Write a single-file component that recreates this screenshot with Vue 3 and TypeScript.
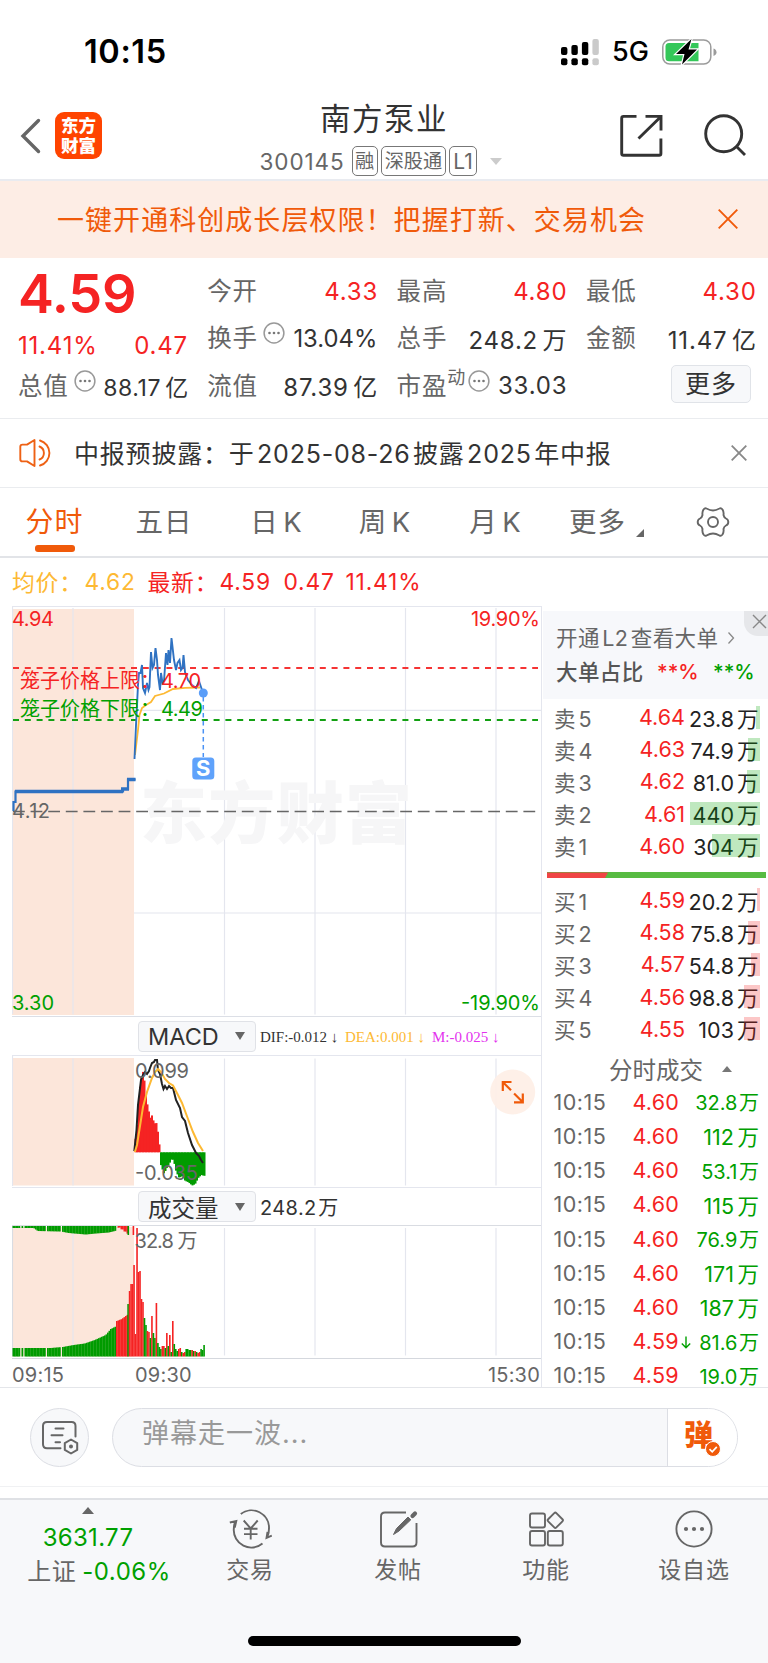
<script setup lang="ts">
interface Quote { label: string; value: string; up?: boolean; dots?: boolean; sup?: string }
interface Order { side: string; price: string; vol: string; bar: number }
interface Trade { price: string; vol: string; down?: boolean }
interface Bar { x: number; y: number; h: number; w: number; c: string }
type Pt = [number, number]

const RED = '#f52323'
const GREEN = '#009b00'

const quoteCols: Quote[][] = [
  [
    { label: '今开', value: '4.33', up: true },
    { label: '换手', value: '13.04%', dots: true },
    { label: '流值', value: '87.39 亿' },
  ],
  [
    { label: '最高', value: '4.80', up: true },
    { label: '总手', value: '248.2 万' },
    { label: '市盈', value: '33.03', dots: true, sup: '动' },
  ],
  [
    { label: '最低', value: '4.30', up: true },
    { label: '金额', value: '11.47 亿' },
  ],
]

const tabs = ['分时', '五日', '日 K', '周 K', '月 K', '更多']

const sells: Order[] = [
  { side: '卖 5', price: '4.64', vol: '23.8 万', bar: 4 },
  { side: '卖 4', price: '4.63', vol: '74.9 万', bar: 12 },
  { side: '卖 3', price: '4.62', vol: '81.0 万', bar: 13 },
  { side: '卖 2', price: '4.61', vol: '440 万', bar: 70 },
  { side: '卖 1', price: '4.60', vol: '304 万', bar: 48 },
]
const buys: Order[] = [
  { side: '买 1', price: '4.59', vol: '20.2 万', bar: 3 },
  { side: '买 2', price: '4.58', vol: '75.8 万', bar: 12 },
  { side: '买 3', price: '4.57', vol: '54.8 万', bar: 9 },
  { side: '买 4', price: '4.56', vol: '98.8 万', bar: 16 },
  { side: '买 5', price: '4.55', vol: '103 万', bar: 16 },
]
const trades: Trade[] = [
  { price: '4.60', vol: '32.8 万' },
  { price: '4.60', vol: '112 万' },
  { price: '4.60', vol: '53.1 万' },
  { price: '4.60', vol: '115 万' },
  { price: '4.60', vol: '76.9 万' },
  { price: '4.60', vol: '171 万' },
  { price: '4.60', vol: '187 万' },
  { price: '4.59', vol: '81.6 万', down: true },
  { price: '4.59', vol: '19.0 万' },
]

const gridX = [73, 224.5, 315, 405.5, 496]

const preOpen = '13.5,811 13.5,802 15.5,802 15.5,791.5 123,791.5 123,789 128,789 128,779.5 135.5,779.5'
const priceLine =
  '134.5,759 136,725 138,685 139,673 140.5,673 142,665 143,688 145,693 147,683 148.5,690 149.5,687 151,652 152.5,668 154,665 155.5,648 157,660 158,675 160,690 161,673 162.5,683 164,681 166,653 167.5,665 168.5,650 170,663 171.5,638 174,660 176,670 177.5,663 179.5,660 181,670 182.5,668 183.5,655 185,672 188,680 192,685 196,688 199,681 201,687 203,693'
const avgLine =
  '135,755 138,730 139.5,715 142,708 146,705 151,702 155,696 164,693.5 173,689 185,687.8 200,687.5'

const difLine =
  '134.3,1151 136.5,1130 138,1105 141,1080 143,1075 145,1072 147,1074 149,1071 150,1068 152,1063 154,1062 155,1060 157,1060 158,1070 160,1074 162,1084 163.5,1089 165,1086 167,1089 169,1086 171,1088 173,1088 176,1100 180,1108 182,1117 185,1121 188,1133 192,1145 196,1153 199,1156 201,1160 203,1163'
const deaLine =
  '134.8,1152 137,1145 140,1126 143,1107 147,1092 152,1078 155,1072 158,1069 161,1072 165,1079 169,1083 173,1085.5 178,1095 182,1103 188,1119 193,1132 198,1143 203,1151'

function at(env: Pt[], x: number): number {
  for (let i = 1; i < env.length; i++) {
    const [x0, y0] = env[i - 1]
    const [x1, y1] = env[i]
    if (x <= x1) return y0 + ((y1 - y0) * (x - x0)) / (x1 - x0)
  }
  return env[env.length - 1][1]
}

const ZERO = 1152.3
const macdUp: Pt[] = [[134, 1150], [137, 1122], [139, 1092], [141, 1077], [143, 1071], [144.5, 1083], [146, 1099], [148, 1108], [150, 1118], [152, 1115], [154, 1124], [156, 1122], [157.5, 1130], [159, 1143], [160, 1150]]
const macdDown: Pt[] = [[160, 1163], [162, 1169], [164, 1174], [166, 1169], [169, 1164], [172, 1158], [174, 1163], [176, 1172], [179, 1178], [182, 1176], [185, 1181], [188, 1182], [192, 1185.5], [195, 1184], [198, 1178], [201, 1175], [205, 1176]]
const macdBars: Bar[] = []
for (let x = 134.5; x < 204.5; x += 1.5) {
  if (x < 159.5) {
    const y = at(macdUp, x + 0.7)
    macdBars.push({ x, y, h: ZERO - y, w: 2, c: RED })
  } else {
    macdBars.push({ x, y: ZERO, h: at(macdDown, x + 0.7) - ZERO, w: 2, c: GREEN })
  }
}

const BASE = 1357.5
const volEnv: Pt[] = [[12, 1349], [50, 1349], [62, 1348], [73, 1346], [84, 1344.5], [94, 1341], [105, 1336], [110, 1330], [116, 1327]]
const volRed: Pt[] = [[116, 1322], [121, 1320], [127, 1315.5]]
const topEnv: Pt[] = [[12, 1229], [33, 1229], [37, 1232], [60, 1232.5], [68, 1234], [85, 1235.5], [95, 1234.5], [108, 1233.5], [116, 1231.5]]
const gaps = [20, 23.4, 46, 61]
const volBars: Bar[] = []
for (let x = 12.5; x < 127; x += 1.5) {
  if (gaps.some((g) => Math.abs(g - x) < 0.75)) continue
  const red = x >= 116
  const y = at(red ? volRed : volEnv, x)
  volBars.push({ x, y, h: BASE - y, w: 1.75, c: red ? RED : GREEN })
  const t = red ? at([[116, 1229], [120, 1231], [127, 1236]], x) - (Math.round(x) % 3) : at(topEnv, x)
  volBars.push({ x, y: 1227, h: t - 1227, w: 1.75, c: red ? RED : GREEN })
}
volBars.push({ x: 127.5, y: 1227, h: 9, w: 1.6, c: GREEN })
volBars.push({ x: 132.6, y: 1227, h: 9, w: 1.6, c: RED })
const tail: [number, string][] = [
  [1305, 'g'], [1292, 'r'], [1285, 'r'], [1285, 'r'], [1266, 'r'], [1335, 'r'], [1229, 'r'], [1273, 'r'], [1272, 'r'], [1300, 'r'],
  [1303, 'r'], [1319, 'g'], [1326, 'g'], [1332, 'r'], [1333, 'r'], [1339, 'g'], [1317, 'r'], [1334, 'g'], [1339, 'g'], [1304, 'r'],
  [1344, 'g'], [1348, 'g'], [1350, 'g'], [1347, 'r'], [1347, 'r'], [1349, 'g'], [1334, 'r'], [1347, 'g'], [1336, 'r'], [1353, 'g'],
  [1322, 'r'], [1345, 'g'], [1350, 'g'], [1352, 'g'], [1350, 'r'], [1349, 'r'], [1353, 'g'], [1354, 'r'], [1353, 'r'], [1350, 'g'],
  [1350, 'g'], [1351, 'g'], [1351, 'g'], [1351, 'r'], [1352, 'g'], [1352, 'r'], [1353, 'g'], [1354, 'r'], [1353, 'r'], [1350, 'g'], [1351, 'g'], [1346, 'g'],
]
tail.forEach(([y, c], i) => {
  volBars.push({ x: 127.3 + i * 1.49, y, h: BASE - y, w: 1.6, c: c === 'r' ? RED : GREEN })
})
</script>

<template>
  <div class="page">
    <header class="status">
      <span class="clock">10:15</span>
      <svg class="signal" width="40" height="28" viewBox="561 37 40 28">
        <g fill="#000">
          <rect x="562" y="46" width="6.4" height="8" rx="2" /><rect x="572.4" y="44" width="6.4" height="10" rx="2" />
          <rect x="582.9" y="41" width="6.4" height="13" rx="2" />
          <rect x="562" y="57.3" width="6.4" height="7" rx="2" /><rect x="572.4" y="57.3" width="6.4" height="7" rx="2" />
          <rect x="582.9" y="57.3" width="6.4" height="7" rx="2" />
        </g>
        <g fill="#cacaca">
          <rect x="593.4" y="38" width="6.4" height="16" rx="2" /><rect x="593.4" y="57.3" width="6.4" height="7" rx="2" />
        </g>
      </svg>
      <span class="net">5G</span>
      <svg class="battery" width="56" height="30" viewBox="661 36 56 30">
        <rect x="662.8" y="39" width="48" height="24" rx="7" fill="#fff" stroke="#9b9b9b" stroke-width="1.5" />
        <path d="M669 42h29.5v18.300h-29.500q-3.500 0-3.500-3.500v-11.300q0-3.500 3.500-3.500z" fill="#34c759" />
        <path d="M713.500 47.500q3 1 3 3.700t-3 3.700z" fill="#9b9b9b" />
        <path d="M691.500 38L676 53h8.500l-2.500 10.500L697 48.500h-8.500z" fill="#000" stroke="#fff" stroke-width="2.400" paint-order="stroke" />
      </svg>
    </header>

    <nav class="title">
      <svg class="back" width="22" height="40" viewBox="20 116 22 40"><path d="M38.500 120.500L23 136l15.500 15.500" fill="none" stroke="#666" stroke-width="3.400" stroke-linecap="round" /></svg>
      <div class="logo"><span>东方</span><span>财富</span></div>
      <div class="name">
        <h1>南方泵业</h1>
        <div class="code"><span class="num">300145</span><i>融</i><i>深股通</i><i class="lv">L1</i><b></b></div>
      </div>
      <svg class="acts" width="130" height="46" viewBox="618 113 130 46" fill="none" stroke="#333" stroke-width="2.900">
        <path d="M636.500 116.400h-13q-1.800 0-1.800 1.800v35.200q0 1.800 1.800 1.800h35.600q1.800 0 1.800-1.800v-15M661 130.500v-14.100h-15.500M660.500 117L638.500 138.500" />
        <circle cx="723.700" cy="133.700" r="18" /><path d="M736 146l9 9" />
      </svg>
    </nav>

    <section class="banner">
      <span>一键开通科创成长层权限！把握打新、交易机会</span>
      <svg width="20" height="20" viewBox="0 0 20 20"><path d="M.7.700l18.600 18.600M19.300.700L.7 19.300" stroke="#f05a0a" stroke-width="1.900" /></svg>
    </section>

    <section class="quote">
      <div class="lead">
        <div class="price">4.59</div>
        <div class="row chg"><span>11.41%</span><span>0.47</span></div>
        <div class="row cap">
          <span class="lab">总值</span>
          <svg class="dots" width="22" height="22" viewBox="0 0 22 22"><circle cx="11" cy="11" r="9.900" fill="none" stroke="#999" stroke-width="1.500" /><g fill="#777"><circle cx="6.500" cy="11" r="1.300" /><circle cx="11" cy="11" r="1.300" /><circle cx="15.500" cy="11" r="1.300" /></g></svg>
          <span class="val small">88.17 亿</span>
        </div>
      </div>
      <div v-for="(col, ci) in quoteCols" :key="ci" class="qcol">
        <div v-for="q in col" :key="q.label" class="row">
          <span class="lab">{{ q.label }}<sup v-if="q.sup">{{ q.sup }}</sup></span>
          <svg v-if="q.dots" class="dots" :class="{ tight: q.sup }" width="22" height="22" viewBox="0 0 22 22"><circle cx="11" cy="11" r="9.900" fill="none" stroke="#999" stroke-width="1.500" /><g fill="#777"><circle cx="6.500" cy="11" r="1.300" /><circle cx="11" cy="11" r="1.300" /><circle cx="15.500" cy="11" r="1.300" /></g></svg>
          <span class="val" :class="{ up: q.up, pct: q.value.endsWith('%') }">{{ q.value }}</span>
        </div>
        <div v-if="ci === 2" class="row"><button class="more">更多</button></div>
      </div>
    </section>

    <section class="notice">
      <svg width="34" height="30" viewBox="19 437 34 30" fill="none" stroke="#ee6114" stroke-width="1.900" stroke-linejoin="round" stroke-linecap="round">
        <path d="M34.500 439v26l-7.500-4.600h-4.500q-2.200 0-2.200-2.200v-12.400q0-2.200 2.200-2.200h4.500zM39.500 445.500a7 7 0 0 1 0 13M40 439.500a13 13 0 0 1 0 25" />
      </svg>
      <span>中报预披露：于 2025-08-26 披露 2025 年中报</span>
      <svg class="cls" width="16" height="16" viewBox="0 0 16 16"><path d="M.7.700l14.600 14.600M15.300.700L.7 15.300" stroke="#888" stroke-width="1.800" /></svg>
    </section>

    <nav class="tabs">
      <div v-for="(t, i) in tabs" :key="t" :class="['tab', 't' + i, { on: i === 0 }]"><span>{{ t }}</span></div>
      <svg class="gear" width="34" height="34" viewBox="-17 -17 34 34" fill="none" stroke="#666" stroke-width="1.900" stroke-linejoin="round">
        <path d="M-6.500-13.500Q-8-14.500-9.500-12.500Q-11-10-10.500-7Q-11-4.500-13-3.500Q-15.300-2.500-15.300 0T-13 3.500Q-11 4.500-10.500 7Q-11 10-9.500 12.500Q-8 14.500-6.500 13.500Q-3 11.500 0 11.500T6.500 13.500Q8 14.500 9.500 12.500Q11 10 10.500 7Q11 4.500 13 3.500Q15.300 2.500 15.300 0T13-3.500Q11-4.500 10.500-7Q11-10 9.500-12.500Q8-14.500 6.500-13.500Q3-11.500 0-11.500T-6.500-13.500z" />
        <circle r="5" />
      </svg>
    </nav>

    <div class="legend">
      <span class="avg">均价：</span><span class="avg">4.62</span><span>最新：</span><span>4.59</span><span>0.47</span><span>11.41%</span>
    </div>

    <main class="market">
      <section class="charts">
        <svg class="panel" width="529" height="411" viewBox="12 606 529 411">
          <rect x="12" y="609" width="122" height="406" fill="#fce6da" />
          <g stroke="#e4e6ee" stroke-width="1.200">
            <path v-for="x in gridX" :key="x" :d="`M${x} 608V1014.500`" />
            <path d="M12 606.500H541M12.500 606V1014M134 710.300H541M134 913H541" />
            <path d="M12 1016.500H541" stroke="#dcdfe6" />
          </g>
          <text x="140" y="838" class="mark" textLength="272">东方财富</text>
          <path d="M13 811.500H541" stroke="#666" stroke-width="1.700" stroke-dasharray="11.800 5.800" />
          <path d="M13 668H538" stroke="#f53434" stroke-width="2" stroke-dasharray="6 5.800" />
          <path d="M13 720H538" stroke="#13a013" stroke-width="2" stroke-dasharray="6 5.800" />
          <polyline :points="avgLine" fill="none" stroke="#fdb933" stroke-width="1.800" />
          <polyline :points="preOpen" fill="none" stroke="#2f72c2" stroke-width="2.200" />
          <path d="M15 791.500H123M121 789H129M127 779.500H135.500" fill="none" stroke="#2f72c2" stroke-width="3.600" />
          <polyline :points="priceLine" fill="none" stroke="#2f72c2" stroke-width="1.900" />
          <path d="M203.300 697V757" stroke="#4a92f5" stroke-width="1.500" stroke-dasharray="4.500 3.500" />
          <circle cx="203.300" cy="693" r="4.500" fill="#5a9df8" />
          <rect x="192.300" y="757.500" width="22" height="22" rx="3.500" fill="#5fa2fb" />
          <text x="203.300" y="775.500" class="s" text-anchor="middle">S</text>
          <g class="t">
            <text x="12" y="626" fill="#f52323" textLength="42">4.94</text>
            <text x="540" y="626" fill="#f52323" text-anchor="end" textLength="69">19.90%</text>
            <text x="20" y="688" fill="#f52323" textLength="140">笼子价格上限：</text>
            <text x="161" y="687.500" fill="#f52323" textLength="40">4.70</text>
            <text x="20" y="716" fill="#00a000" textLength="140">笼子价格下限：</text>
            <text x="161" y="715.500" fill="#00a000" textLength="42">4.49</text>
            <text x="12" y="818" fill="#666" textLength="38">4.12</text>
            <text x="12" y="1010" fill="#00a000" textLength="42">3.30</text>
            <text x="540" y="1010" fill="#00a000" text-anchor="end" textLength="79">-19.90%</text>
          </g>
        </svg>

        <div class="head">
          <div class="pick"><span>MACD</span><i></i></div>
          <p class="ind"><span>DIF:-0.012 ↓</span><span class="dea">DEA:0.001 ↓</span><span class="m">M:-0.025 ↓</span></p>
        </div>

        <svg class="panel" width="529" height="133" viewBox="12 1055 529 133">
          <rect x="12" y="1058" width="122" height="127.500" fill="#fce6da" />
          <g stroke="#e4e6ee" stroke-width="1.200">
            <path v-for="x in gridX" :key="x" :d="`M${x} 1058.500V1185.500`" />
            <path d="M12 1055.500H541M12.500 1055V1186M12 1187.500H541" />
          </g>
          <rect v-for="(b, i) in macdBars" :key="i" :x="b.x" :y="b.y" :width="b.w" :height="b.h" :fill="b.c" />
          <polyline :points="difLine" fill="none" stroke="#222" stroke-width="2" />
          <polyline :points="deaLine" fill="none" stroke="#fdb933" stroke-width="2" />
          <g class="t" fill="#666">
            <text x="135" y="1077.500" textLength="54">0.099</text>
            <text x="135" y="1179.500" textLength="63">-0.035</text>
          </g>
          <circle cx="512.700" cy="1092" r="22.500" fill="#feefe6" fill-opacity=".92" />
          <path d="M502.800 1091V1082H511.500M503 1082.200l8 8M522.800 1093.500V1102.300H514M522.600 1102l-8.500-8.500" fill="none" stroke="#f05a0a" stroke-width="2.200" />
        </svg>

        <div class="head">
          <div class="pick"><span>成交量</span><i></i></div>
          <p class="vol">248.2 万</p>
        </div>

        <svg class="panel" width="529" height="133" viewBox="12 1226 529 133">
          <rect x="12" y="1228" width="122" height="129.500" fill="#fce6da" />
          <g stroke="#e4e6ee" stroke-width="1.200">
            <path v-for="x in gridX" :key="x" :d="`M${x} 1229V1356.500`" />
            <path d="M12 1226.500H541M12.500 1226V1357" stroke="#d9dce2" />
          </g>
          <rect v-for="(b, i) in volBars" :key="i" :x="b.x" :y="b.y" :width="b.w" :height="b.h" :fill="b.c" />
          <text x="134.500" y="1248.500" class="t" fill="#666" textLength="63">32.8 万</text>
        </svg>

        <div class="axis"><span>09:15</span><span>09:30</span><span>15:30</span></div>
      </section>

      <aside class="book">
        <div class="l2">
          <p>开通 L2 查看大单<svg width="8" height="14" viewBox="0 0 8 14"><path d="M1.500 1.500L6.500 7l-5 5.500" fill="none" stroke="#888" stroke-width="1.300" /></svg></p>
          <p class="ratio"><span>大单占比</span><span class="up">**%</span><span class="down">**%</span></p>
          <div class="corner"><svg width="15" height="15" viewBox="0 0 15 15"><path d="M1 1l13 13M14 1L1 14" stroke="#888" stroke-width="1.400" /></svg></div>
        </div>
        <div class="orders">
          <div v-for="o in sells" :key="o.side" class="order">
            <span class="side">{{ o.side }}</span><span class="p">{{ o.price }}</span><span class="v">{{ o.vol }}</span>
            <em class="sell" :style="{ width: o.bar + 'px' }"></em>
          </div>
        </div>
        <div class="power"><i></i></div>
        <div class="orders">
          <div v-for="o in buys" :key="o.side" class="order">
            <span class="side">{{ o.side }}</span><span class="p">{{ o.price }}</span><span class="v">{{ o.vol }}</span>
            <em class="buy" :style="{ width: o.bar + 'px' }"></em>
          </div>
        </div>
        <div class="dealhead"><span>分时成交</span><i></i></div>
        <div v-for="(t, i) in trades" :key="i" class="deal">
          <span class="tm">10:15</span><span class="dp">{{ t.price }}</span>
          <svg v-if="t.down" width="10" height="13" viewBox="0 0 10 13"><path d="M5 .5v11M.8 7.500L5 11.700l4.200-4.200" fill="none" stroke="#00a000" stroke-width="1.400" /></svg>
          <span class="dv" :class="{ dec: t.vol.includes('.') }">{{ t.vol }}</span>
        </div>
      </aside>
    </main>

    <section class="comment">
      <div class="round">
        <svg width="38" height="36" viewBox="41 1421 38 36" fill="none" stroke="#666" stroke-width="2" stroke-linecap="round">
          <path d="M60.500 1449.300h-13.500q-4 0-4-4v-18.300q0-4 4-4h24.500q4 0 4 4v10.500M55.500 1429.500h8M51.500 1436.300h11M55.500 1443.300h4.500" />
          <path d="M71 1440.500l6.200 3.600v6.800l-6.200 3.600-6.200-3.600v-6.800z" stroke-linejoin="round" /><circle cx="71" cy="1447.500" r="1" fill="#666" />
        </svg>
      </div>
      <div class="input">
        <span>弹幕走一波...</span>
        <div class="send"><b>弹</b>
          <svg width="16" height="16" viewBox="0 0 16 16"><circle cx="8" cy="8" r="7.500" fill="#f05a0a" stroke="#fff" /><path d="M4.500 8.200l2.700 2.600 4.600-5" fill="none" stroke="#fff" stroke-width="1.700" /></svg>
        </div>
      </div>
    </section>

    <footer class="bottom">
      <div class="index"><i></i><span class="down">3631.77</span><p><span>上证</span><span class="down">-0.06%</span></p></div>
      <div class="item">
        <svg width="46" height="40" viewBox="227 1509.500 46 40" fill="none" stroke="#666" stroke-width="1.900">
          <path d="M240.800 1514.500a17.500 17.500 0 0 1 28.200 14.500q0 4-1.500 8M262.500 1544a17.500 17.500 0 0 1-28.700-14.500q0-4 1.500-7.500M229.800 1523l6.500-1.500-1.500 6.500M271.800 1536.200l-5.300 2.200 1-6" />
          <path d="M243.700 1521l7 8 7-8M250.700 1529v11M244 1529.300h13.500M244 1534.600h13.500" />
        </svg>
        <span>交易</span>
      </div>
      <div class="item">
        <svg width="40" height="40" viewBox="378 1509.500 40 40" fill="none" stroke="#666" stroke-width="1.900">
          <path d="M406 1513h-21q-4 0-4 4v26q0 4 4 4h27.500q4 0 4-4v-19.500" />
          <path d="M393.500 1535l3-6 11.500-11.500 2.800 2.800L399 1531.500z" fill="#666" stroke-width="1" stroke-linejoin="round" /><path d="M412.500 1516.500l2.500-2.500" stroke-width="4.200" stroke-linecap="round" />
        </svg>
        <span>发帖</span>
      </div>
      <div class="item">
        <svg width="40" height="40" viewBox="526 1509.500 40 40" fill="none" stroke="#666" stroke-width="1.900">
          <rect x="530" y="1514" width="15" height="14" rx="2" /><rect x="530" y="1531.500" width="15" height="14.500" rx="2" />
          <rect x="547.800" y="1531.500" width="15" height="14.500" rx="2" /><rect x="549.500" y="1515" width="11.600" height="11.600" rx="1.500" transform="rotate(45 555.300 1520.800)" />
        </svg>
        <span>功能</span>
      </div>
      <div class="item">
        <svg width="40" height="40" viewBox="674 1509.500 40 40"><circle cx="694" cy="1529.500" r="17.600" fill="none" stroke="#666" stroke-width="1.900" /><g fill="#666"><circle cx="686" cy="1529.500" r="2.100" /><circle cx="694" cy="1529.500" r="2.100" /><circle cx="702" cy="1529.500" r="2.100" /></g></svg>
        <span>设自选</span>
      </div>
      <div class="home"></div>
    </footer>
  </div>
</template>

<style>
body { margin: 0; background: #fff; }
</style>

<style scoped>
* { box-sizing: border-box; margin: 0; padding: 0; }
.page {
  width: 768px; height: 1663px; overflow: hidden; background: #fff; color: #333;
  font-family: Inter, "Noto Sans CJK SC", sans-serif; white-space: nowrap; display: flex; flex-direction: column;
}
svg { display: block; flex: none; }
i, em { font-style: normal; }
.up { color: #f52323; }
.down { color: #00a000; }

.status { height: 103px; display: flex; align-items: center; flex: none; }
.clock { width: 476px; margin-left: 84px; font-size: 32.500px; font-weight: 600; letter-spacing: .6px; color: #000; }
.net { width: 48px; margin-left: 12px; font-size: 27px; font-weight: 500; color: #000; }
.battery { margin-left: 1px; }

.title { height: 78px; display: flex; align-items: flex-start; border-bottom: 2px solid #e9ebf0; flex: none; }
.back { margin: 13px 0 0 20px; }
.logo {
  width: 47px; height: 47px; margin: 9px 0 0 13px; border-radius: 9px; background: #ff4400; color: #fff;
  font-size: 17.500px; font-weight: 900; line-height: 19.500px; display: flex; flex-direction: column; align-items: center; justify-content: center;
}
.name { width: 516px; }
.name h1 { width: 564px; font-size: 30.500px; line-height: 32px; letter-spacing: 1.500px; font-weight: 400; text-align: center; }
.code { height: 30px; margin: 11px 0 0 157.500px; display: flex; align-items: center; color: #666; }
.code .num { width: 92px; font-size: 22.500px; letter-spacing: .9px; }
.code i { height: 30px; margin-right: 3.500px; padding: 0 2.500px; border: 1.500px solid #777; border-radius: 5px; font-size: 19.200px; line-height: 29px; }
.code i.lv { padding: 0 3px; font-size: 21px; }
.code b { margin-left: 10px; border: 6.500px solid transparent; border-top: 7px solid #ccc; border-bottom: 0; }
.acts { margin: 10px 0 0 -.5px; }

.banner { height: 77px; display: flex; align-items: center; background: #fdede5; color: #f05a0a; font-size: 27px; letter-spacing: 1.050px; padding: 0 0 2px 57px; flex: none; }
.banner span { width: 661px; }

.quote { height: 161px; padding: 9px 0 0 18px; display: flex; gap: 19.300px; border-bottom: 1.500px solid #eaecef; flex: none; }
.lead, .qcol { width: 170px; }
.row { display: flex; align-items: center; justify-content: space-between; height: 47.500px; }
.price { height: 54px; font-size: 54px; font-weight: 600; line-height: 54px; letter-spacing: -.3px; color: #f52323; }
.chg { height: 48px; color: #f52323; font-size: 24px; letter-spacing: .8px; }
.cap { height: 34px; }
.lab { padding-bottom: 3px; color: #666; font-size: 24.500px; letter-spacing: .8px; }
.lab sup { position: relative; top: -11px; font-size: 18px; line-height: 1; vertical-align: baseline; letter-spacing: 0; }
.val { flex: 1; margin-right: -.8px; text-align: right; font-size: 24px; letter-spacing: .8px; color: #333; word-spacing: -3px; }
.val.up { padding-top: 1px; color: #f52323; }
.val.small { font-size: 23px; letter-spacing: .6px; }
.val.pct { margin-right: 0; font-size: 23.800px; letter-spacing: 0; }
.dots { margin: -10px 0 0 5px; }
.dots.tight { margin-left: 3px; }
.more { width: 80px; height: 38px; margin: -3px 0 0 85px; border: 1.500px solid #e0e3e8; border-radius: 5px; background: #f7f8fa; font: inherit; font-size: 25px; line-height: 34px; letter-spacing: 1px; color: #333; }

.notice { height: 69px; display: flex; align-items: center; padding-left: 19px; border-bottom: 1.500px solid #eaecef; flex: none; }
.notice span { width: 657px; margin: -2px 0 0 21px; font-size: 25px; letter-spacing: .8px; word-spacing: -5.400px; }

.tabs { height: 70px; display: flex; border-bottom: 2px solid #e2e4e8; font-size: 27.500px; color: #666; flex: none; }
.tab { position: relative; line-height: 68px; text-align: center; letter-spacing: 1px; word-spacing: -4px; }
.t0 { width: 109px; } .t1 { width: 110px; } .t2 { width: 115px; } .t3 { width: 102px; } .t4 { width: 119px; } .t5 { width: 85px; }
.tab.on { color: #f05a0a; font-size: 28px; }
.tab.on::after { content: ""; position: absolute; left: 35px; top: 57px; width: 39.500px; height: 6.500px; border-radius: 3px; background: #f05a0a; }
.t5::after { content: ""; position: absolute; left: 81px; top: 41px; border-left: 8px solid transparent; border-bottom: 8px solid #666; }
.gear { margin: 17px 0 0 56px; }

.legend { height: 48px; display: grid; grid-template-columns: 72.500px 63px 72px 64px 62px auto; align-items: center; padding: 0 0 2px 12px; color: #f52323; font-size: 22.800px; letter-spacing: .8px; flex: none; }
.avg { color: #fdb933; }

.market { height: 782px; display: flex; border-bottom: 1.500px solid #e4e6ea; flex: none; }
.charts { width: 542px; padding-left: 12px; border-right: 1.500px solid #e4e6ee; display: flex; flex-direction: column; }
.t { font-family: Inter, "Noto Sans CJK SC", sans-serif; font-size: 20px; }
.mark { font-size: 67px; font-weight: 900; fill: #f6f6f7; }
.s { font-size: 22px; font-weight: 700; fill: #fff; }
.head { height: 38px; display: flex; align-items: center; padding: 1px 0 0 126px; }
.pick { width: 118px; height: 31px; padding: 0 10px 0 9px; display: flex; align-items: center; justify-content: space-between; border: 1.500px solid #e0e2e7; border-radius: 4px; background: #f7f8fa; font-size: 23.500px; }
.pick i { border: 5px solid transparent; border-top: 8px solid #666; border-bottom: 0; }
.ind { display: flex; margin: 2px 0 0 4px; font-family: "Liberation Serif", serif; font-size: 15px; color: #333; }
.ind span { width: 85px; }
.ind .dea { width: 87px; color: #fdb933; }
.ind .m { color: #e332ee; }
.vol { margin-left: 4px; font-size: 20px; letter-spacing: .4px; word-spacing: -4.500px; }
.axis { height: 29px; display: grid; grid-template-columns: 123px 1fr auto; align-items: center; padding: 2px 1px 0 0; border-top: 1.500px solid #d5d8de; color: #666; font-size: 20px; letter-spacing: .2px; line-height: 28px; }

.book { width: 226px; padding-top: 5px; }
.l2 { position: relative; height: 88px; margin-left: 1px; padding: 10px 0 0 13px; background: #f7f8fb; color: #666; font-size: 21.500px; line-height: 34px; word-spacing: -4px; }
.l2 p { display: flex; align-items: center; letter-spacing: .4px; }
.l2 p svg { margin-left: 9px; }
.ratio span { width: 101px; font-weight: 500; color: #555; }
.l2 .ratio .up { width: 56px; color: #f52323; }
.l2 .ratio .down { width: auto; color: #00a000; }
.l2 .ratio .up, .l2 .ratio .down { font-size: 20.500px; letter-spacing: 0; }
.corner { position: absolute; right: 0; top: 0; width: 24px; height: 25px; padding: 3px 0 0 8px; border-radius: 0 0 0 14px; background: #e6e7ea; }
.orders { padding-top: 2px; }
.order { position: relative; height: 32.200px; display: flex; align-items: center; padding-left: 12px; font-size: 21.500px; word-spacing: -3px; }
.side { width: 50px; color: #666; }
.p { width: 81px; text-align: right; color: #f52323; }
.v { width: 73.500px; text-align: right; color: #222; }
.order em { position: absolute; right: 8px; top: 4.500px; height: 23px; }
.sell { background: rgba(0, 165, 0, .25); }
.buy { background: rgba(245, 30, 30, .25); }
.power { height: 5.500px; margin: 10.500px 2px 4px 5px; background: #57bb42; }
.power i { display: block; width: 61px; height: 5.500px; background: #f04545; clip-path: polygon(0 0, 100% 0, 58px 100%, 0 100%); }
.dealhead { height: 39.800px; padding: 7.500px 0 0 67px; display: flex; align-items: center; font-size: 23.500px; color: #666; }
.dealhead i { margin-left: 19px; border: 5.500px solid transparent; border-bottom: 6px solid #777; border-top: 0; }
.deal { height: 34.200px; display: flex; align-items: center; padding-left: 11.500px; font-size: 21.500px; }
.tm { width: 79px; color: #666; letter-spacing: .5px; }
.dp { width: 46px; color: #f52323; letter-spacing: .2px; }
.deal svg { margin: 2px -12px 0 2px; }
.dv { width: 80.500px; text-align: right; color: #00a000; word-spacing: -2.500px; }
.dv.dec { font-size: 20px; word-spacing: -4px; }

.comment { height: 99px; display: flex; align-items: flex-start; padding: 20px 0 0 30px; border-bottom: 1px solid #f0f1f3; flex: none; }
.round { width: 59px; height: 59px; display: flex; align-items: center; justify-content: center; border: 1.500px solid #dcdee4; border-radius: 50%; background: #f7f8fa; }
.input { width: 626px; height: 59px; margin-left: 23px; display: flex; overflow: hidden; border: 1.500px solid #dcdee4; border-radius: 30px; background: #f7f8fa; }
.input > span { width: 554px; padding-left: 29px; font-size: 27px; line-height: 50px; letter-spacing: 1px; color: #999; }
.send { position: relative; flex: 1; padding-left: 16px; border-left: 1.500px solid #dcdee4; background: #fff; }
.send b { font-size: 29px; font-weight: 900; line-height: 54px; color: #f05a0a; }
.send svg { position: absolute; left: 37px; top: 32px; }

.bottom { position: relative; height: 165px; margin-top: 11px; display: flex; border-top: 2px solid #dfe1e5; background: #f7f8fa; color: #666; flex: none; }
.index { width: 176px; display: flex; flex-direction: column; align-items: center; font-size: 24px; }
.index i { margin-top: 7px; border: 6.500px solid transparent; border-bottom: 7px solid #666; border-top: 0; }
.index > span { margin-top: 6.500px; line-height: 34px; letter-spacing: .3px; }
.index p { display: flex; gap: 6px; margin-left: 22px; line-height: 34px; letter-spacing: .5px; }
.item { width: 148px; padding-top: 9px; display: flex; flex-direction: column; align-items: center; font-size: 23px; letter-spacing: .8px; }
.item span { margin-top: 4px; line-height: 34px; }
.home { position: absolute; left: 247.500px; top: 136px; width: 273.500px; height: 10px; border-radius: 5px; background: #000; }
</style>
